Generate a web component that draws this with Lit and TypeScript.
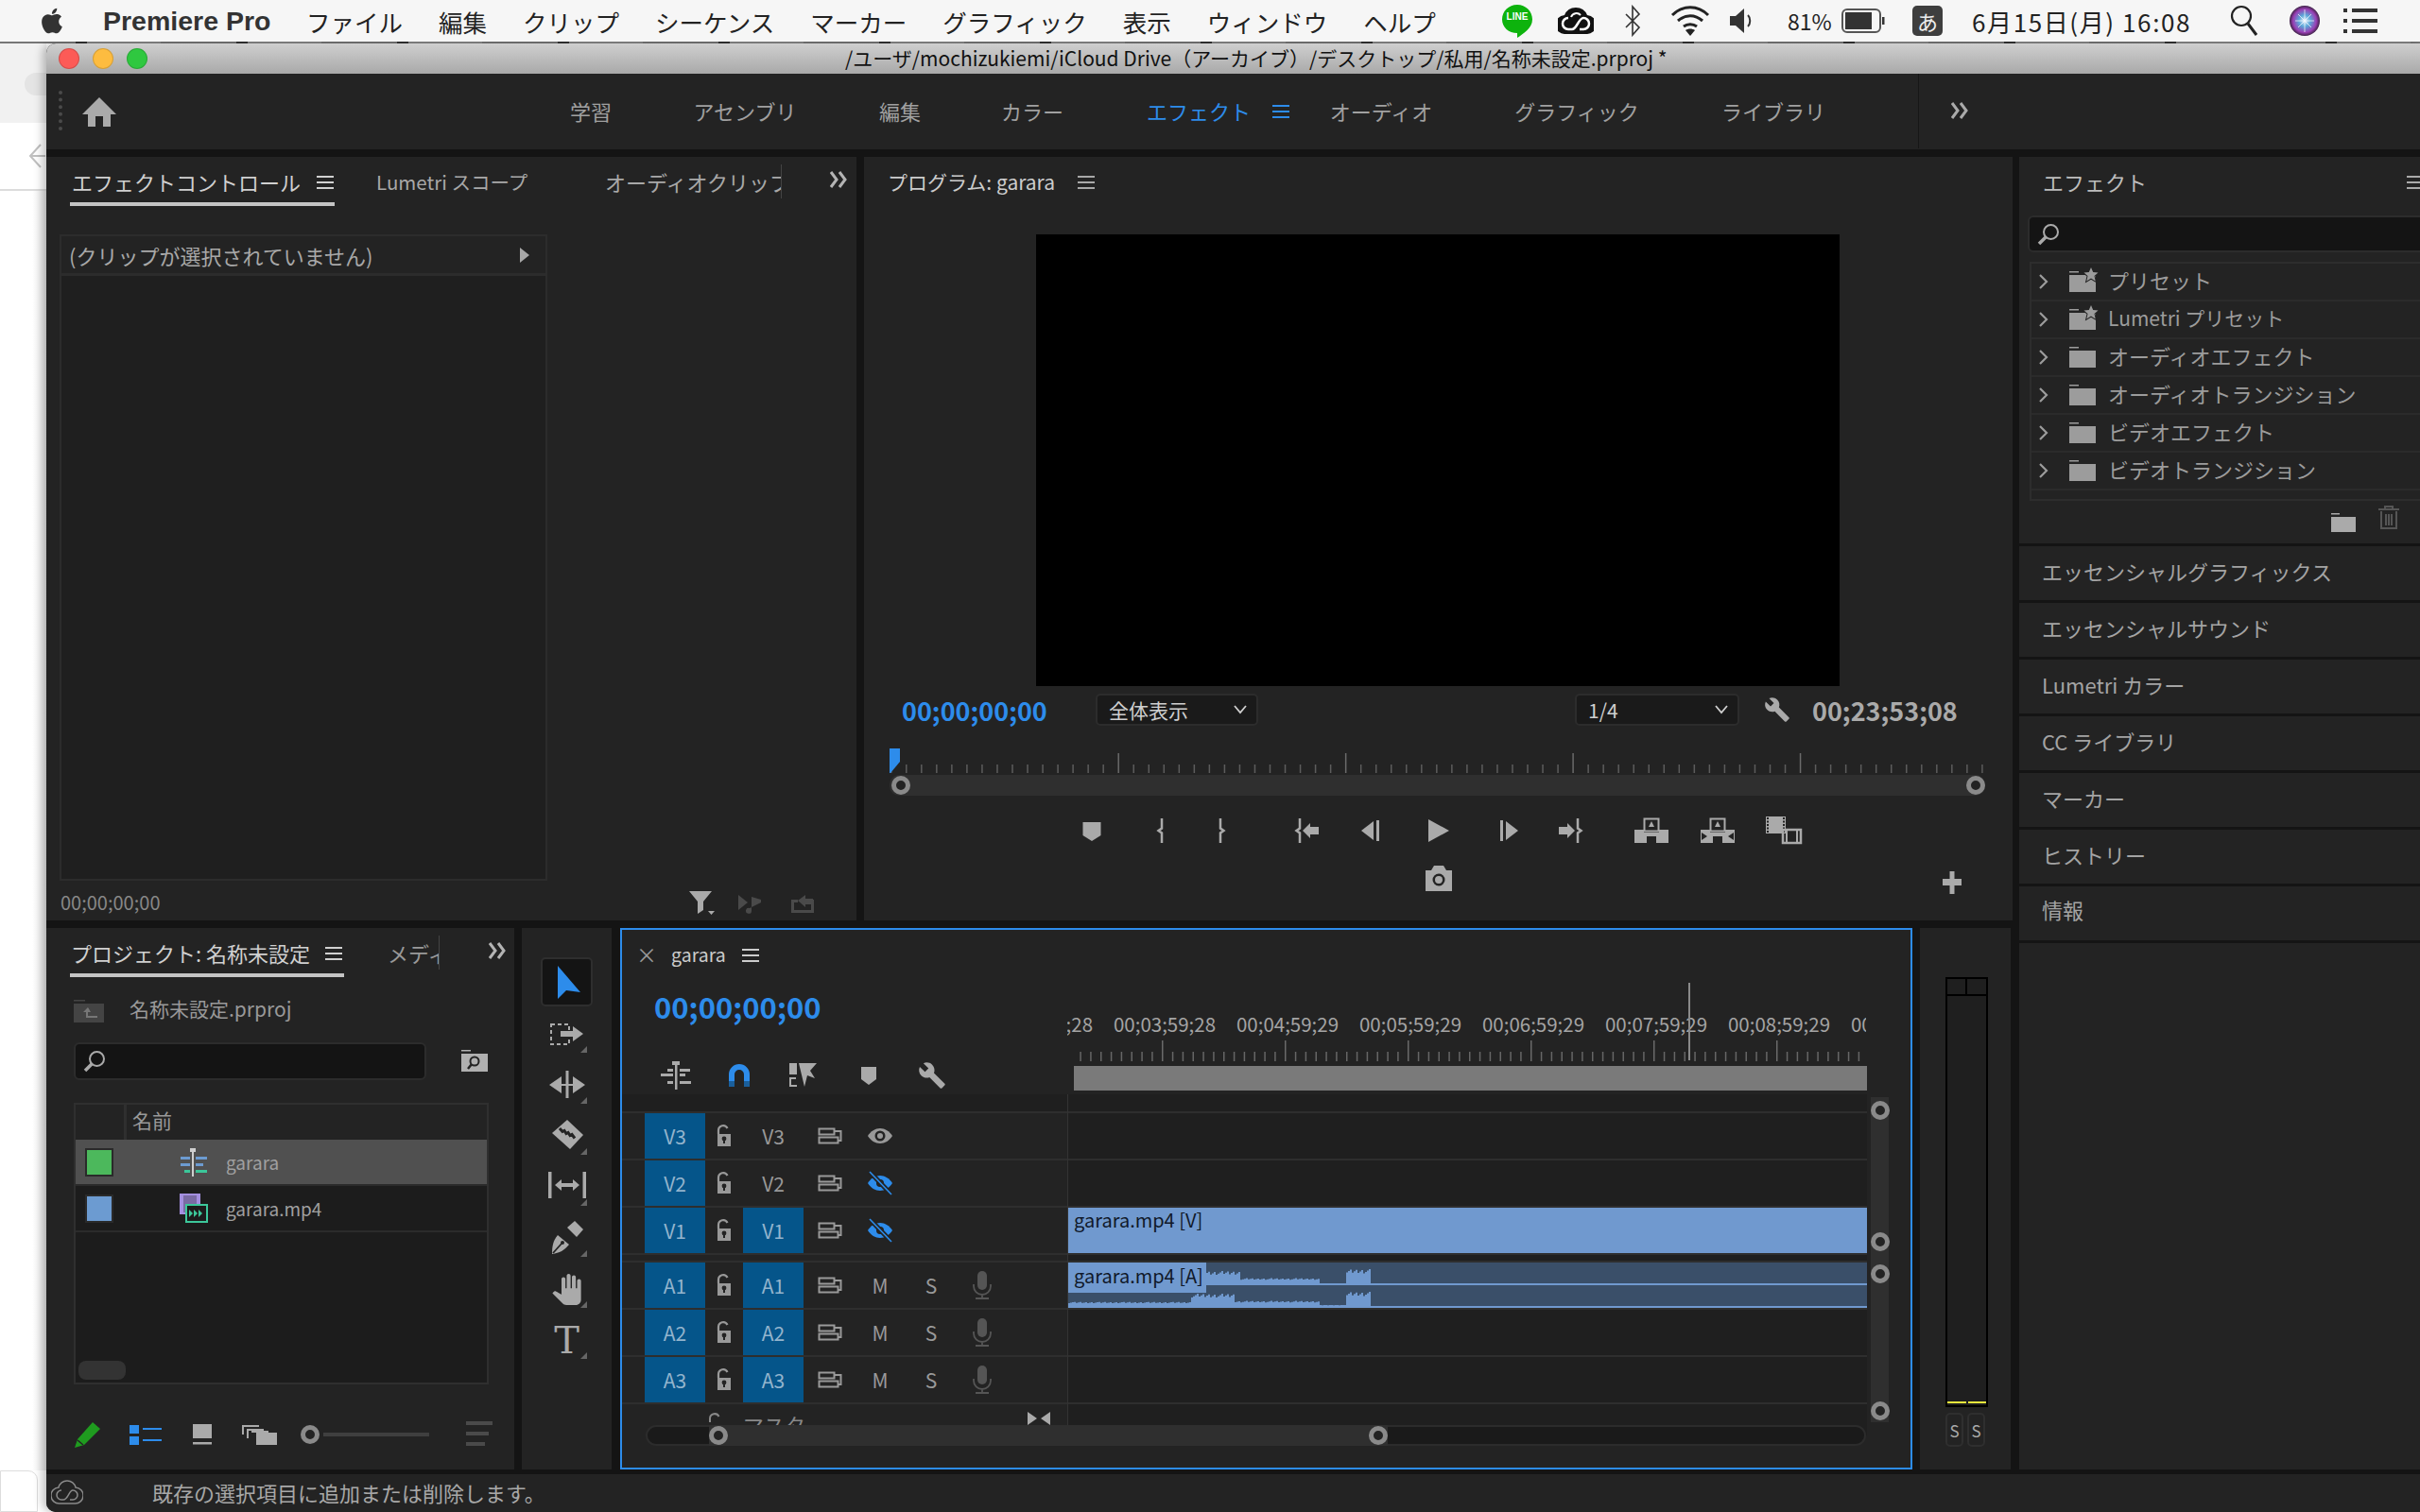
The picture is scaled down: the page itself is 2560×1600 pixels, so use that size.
import { LitElement, html, css, svg } from "lit";
import { customElement } from "lit/decorators.js";

const ic = (w: number, h: number, body: unknown, cls = "") =>
  html`<svg class="${cls}" width="${w}" height="${h}" viewBox="0 0 ${w} ${h}" fill="currentColor">${body}</svg>`;

const burger = (c = "") => ic(18, 14, svg`<rect y="0" width="18" height="2"/><rect y="6" width="18" height="2"/><rect y="12" width="18" height="2"/>`, c);
const dbl = () => ic(20, 18, svg`<path d="M2 1l6 8-6 8M11 1l6 8-6 8" fill="none" stroke="currentColor" stroke-width="3"/>`);
const search = (s = 24) => html`<svg width="${s}" height="${s}" viewBox="0 0 24 24" fill="none" stroke="currentColor"><circle cx="14.5" cy="9.5" r="7.5" stroke-width="2"/><path d="M9 15l-7 7" stroke-width="3.5"/></svg>`;
const folder = () => ic(30, 26, svg`<rect x="1" y="2" width="10" height="1.5"/><rect x="1" y="6" width="28" height="18"/>`);
const starFolder = () => html`<svg class="ov" width="32" height="26" viewBox="0 0 32 26" fill="currentColor"><rect x="1" y="2" width="10" height="1.500"/><rect x="1" y="6" width="28" height="18"/><path d="M24 -2l2.200 5 5.300.5-4 3.600 1.200 5.300-4.700-2.800-4.700 2.800 1.200-5.300-4-3.600 5.300-.5z" stroke="#232323" stroke-width="2" paint-order="stroke"/></svg>`;
const chevron = () => ic(14, 20, svg`<path d="M3 3l7 7-7 7" fill="none" stroke="currentColor" stroke-width="2.2"/>`);
const wrench = (s = 28) => html`<svg width="${s}" height="${s}" viewBox="0 0 24 24" fill="currentColor"><path d="M22.7 19l-9.1-9.1c.9-2.3.4-5-1.5-6.9-2-2-5-2.4-7.4-1.3L9 6 6 9 1.6 4.7C.4 7.1.9 10.1 2.9 12.1c1.9 1.9 4.6 2.4 6.9 1.5l9.1 9.1c.4.4 1 .4 1.4 0l2.3-2.3c.5-.4.5-1.1.1-1.4z"/></svg>`;
const markerI = () => ic(40, 40, svg`<path d="M10.5 11h19v14L20 31l-9.500-6z"/>`);
const lockI = () => ic(20, 24, svg`<path d="M4 10V6a5 5 0 0 1 9.500-2" fill="none" stroke="currentColor" stroke-width="2.200"/><path d="M3 10h14v13H3z"/><circle cx="10" cy="15" r="2.400" fill="#232323"/><rect x="9" y="15" width="2" height="5" fill="#232323"/>`);
const syncI = () => ic(26, 20, svg`<path d="M1.500 2.500h16v6h-16zM1.500 11.500h20v6h-20zM17.500 5h7v10h-3" fill="none" stroke="currentColor" stroke-width="2"/>`);
const eyeI = () => ic(28, 20, svg`<path d="M1 10c3-5 8-8 13-8s10 3 13 8c-3 5-8 8-13 8S4 15 1 10z"/><circle cx="14" cy="10" r="5.500" fill="#232323"/><circle cx="14" cy="10" r="3"/>`);
const eyeOff = () => html`<span class="blue">${ic(28, 26, svg`<path d="M1 13c3-5 8-8 13-8s10 3 13 8c-3 5-8 8-13 8S4 18 1 13z"/><circle cx="14" cy="13" r="4" fill="#232323"/><path d="M3 1l23 24" stroke="#232323" stroke-width="5"/><path d="M3 1l23 24" stroke="currentColor" stroke-width="1.600"/>`)}</span>`;
const micI = () => ic(20, 30, svg`<rect x="5" y="0" width="10" height="20" rx="5"/><path d="M1 14v2a9 9 0 0 0 18 0v-2M10 25v4M3 29h14" fill="none" stroke="currentColor" stroke-width="1.800"/>`);

const placed = (origin: number, size: number, items: [number, unknown][]) => {
  let cur = origin;
  return items.map(([c, t]) => {
    const m = c - size / 2 - cur;
    cur = c + size / 2;
    return html`<span class="slot" style="margin-left:${m}px;width:${size}px">${t}</span>`;
  });
};

const filmDash = (x: number, y0: number, n: number) => {
  const out: unknown[] = [];
  for (let i = 0; i < n; i++) out.push(svg`<rect x="${x}" y="${y0 + i * 3.500}" width="2" height="2" fill="#232323"/>`);
  return out;
};

const transport: [number, unknown][] = [
  [1155, markerI()],
  [1229, ic(40, 40, svg`<path d="M20 7v10.500l-3.500 2.500 3.500 2.500V33" fill="none" stroke="currentColor" stroke-width="2.500"/>`)],
  [1291, ic(40, 40, svg`<path d="M20 7v10.500l3.500 2.500-3.500 2.500V33" fill="none" stroke="currentColor" stroke-width="2.500"/>`)],
  [1384, ic(40, 40, svg`<path d="M11 7v10.500l-3.500 2.500 3.500 2.500V33" fill="none" stroke="currentColor" stroke-width="2.500"/><path d="M14 20l8-8v4h9v8h-9v4z"/>`)],
  [1452, ic(40, 40, svg`<path d="M8 20l13-10v20z"/><rect x="24" y="9" width="3" height="22"/>`)],
  [1522, ic(40, 40, svg`<path d="M9 8l22 12L9 32z"/>`)],
  [1594, ic(40, 40, svg`<path d="M32 20L19 10v20z"/><rect x="13" y="9" width="3" height="22"/>`)],
  [1660, ic(40, 40, svg`<path d="M29 7v10.500l3.500 2.500-3.500 2.500V33" fill="none" stroke="currentColor" stroke-width="2.500"/><path d="M26 20l-8-8v4H9v8h9v4z"/>`)],
  [1747, ic(40, 40, svg`<path d="M12.500 7.500h15v13h-15z" fill="none" stroke="currentColor" stroke-width="2"/><path d="M20 10l3 6h-6z"/><path d="M2 19h10v3h16v-3h10v14H25v-7H15v7H2z"/>`)],
  [1817, ic(40, 40, svg`<path d="M12.500 7.500h15v13h-15z" fill="none" stroke="currentColor" stroke-width="2"/><path d="M20 10l3 6h-6z"/><path d="M2 19h10v3h16v-3h10v14H25v-7H15v7H2z"/><path d="M3 22l6 4-6 4zM37 22l-6 4 6 4z" fill="#232323"/>`)],
  [1887, ic(40, 40, svg`<rect x="1" y="5" width="21" height="18"/>${filmDash(2, 6, 5)}${filmDash(19, 6, 5)}<rect x="19" y="19" width="19" height="14" fill="none" stroke="currentColor" stroke-width="2.500"/><rect x="22" y="19" width="2" height="14"/><rect x="33" y="19" width="2" height="14"/>`)],
];

const tools: [unknown, boolean][] = [
  [html`<span class="blue">${ic(40, 40, svg`<path d="M10 3l24 28-15-2-9 9z"/>`)}</span>`, false],
  [ic(40, 40, svg`<path d="M3 10h19v21H3z" fill="none" stroke="currentColor" stroke-width="2" stroke-dasharray="4 3"/><path d="M13 17h13v-5l11 8-11 8v-5H13z"/>`), true],
  [ic(40, 40, svg`<path d="M1 20l13-9v18zM39 20l-13-9v18z"/><rect x="18.500" y="5" width="3" height="29"/><rect x="13" y="19" width="14" height="2"/>`), true],
  [ic(40, 40, svg`<path d="M20 3l17 16-14 15L4 17z"/><path d="M12 12l3 3.500 2-1 2 3 2-1 2 3 2-1 3 4" fill="none" stroke="#232323" stroke-width="3"/>`), true],
  [ic(40, 40, svg`<rect x="0" y="4" width="3.500" height="28"/><rect x="36.500" y="4" width="3.500" height="28"/><path d="M7 18l7-6v4h12v-4l7 6-7 6v-4H14v4z"/>`), true],
  [ic(40, 40, svg`<path d="M4 37c0-8 1-14 6-20l12 10c-5 6-10 9-18 10z"/><path d="M5 36l9-10" stroke="#232323" stroke-width="1.800"/><circle cx="15" cy="25" r="2" fill="#232323"/><path d="M20 9l8-7 9 9-7 8z"/>`), true],
  [html`<svg width="33" height="33" viewBox="0 0 24 24" fill="currentColor"><path d="M23 5.500V20c0 2.200-1.800 4-4 4h-7.300c-1.080 0-2.100-.43-2.850-1.190L1 14.830s1.260-1.230 1.300-1.250c.22-.19.49-.29.79-.29.22 0 .42.06.6.16.04.01 4.310 2.460 4.310 2.460V4c0-.83.67-1.500 1.500-1.500S11 3.170 11 4v7h1V1.500c0-.83.67-1.500 1.500-1.500S15 .67 15 1.500V11h1V2.500c0-.83.67-1.500 1.500-1.500s1.500.67 1.500 1.500V11h1V5.500c0-.83.67-1.500 1.500-1.500s1.500.67 1.500 1.500z"/></svg>`, true],
  [html`<span class="tool-t">T</span>`, true],
];

const jitter = (i: number) => ((i * 7919) % 13) / 13;
const wave = (w: number, f: (x: number) => number, h: number) => {
  let d = `M0 ${h}`;
  for (let x = 0; x < w; x += 2) {
    const v = f(x);
    const y = v <= 0 ? h : h - v * (0.75 + 0.35 * jitter(x));
    d += `V${y.toFixed(1)}H${x + 2}`;
  }
  d += `V${h}Z`;
  return svg`<path d="${d}" fill="#7099cf"/>`;
};
const topWave = (x: number) => (x < 146 ? 0 : x < 182 ? 12 : x < 266 ? 5 : x < 294 ? 0 : x < 320 ? 14 : 0);
const botWave = (x: number) => (x < 130 ? 4 : x < 175 ? 12 : x < 266 ? 5 : x < 294 ? 1 : x < 320 ? 14 : 0);

const programRuler = () => {
  const out: unknown[] = [];
  for (let i = 0; i < 73; i++) {
    const x = 1 + i * 16.03;
    const major = i % 15 === 0 && i > 0 && i < 72;
    out.push(svg`<rect x="${x}" y="${major ? 5 : 17}" width="1.500" height="${major ? 21 : 9}" fill="${major ? "#6a6a6a" : "#5c5c5c"}"/>`);
  }
  return html`<svg class="pruler" width="1157" height="28">${out}<path d="M0 0h11v14L1 26H0z" fill="#2d8ceb"/></svg>`;
};
const tlRuler = () => {
  const out: unknown[] = [];
  for (let i = 0; i < 78; i++) {
    const x = 100 + (i - 9) * 10.833;
    if (x < 3 || x > 845) continue;
    const major = (i - 9) % 12 === 0;
    out.push(svg`<rect x="${x}" y="${major ? 0 : 12}" width="1.500" height="${major ? 22 : 10}" fill="${major ? "#6a6a6a" : "#666"}"/>`);
  }
  return html`<svg class="tlruler" width="845" height="22">${out}</svg>`;
};

const menus = ["ファイル", "編集", "クリップ", "シーケンス", "マーカー", "グラフィック", "表示", "ウィンドウ", "ヘルプ"];
const fxItems: [string, boolean][] = [
  ["プリセット", true], ["Lumetri プリセット", true], ["オーディオエフェクト", false],
  ["オーディオトランジション", false], ["ビデオエフェクト", false], ["ビデオトランジション", false],
];
const fxPanels = ["エッセンシャルグラフィックス", "エッセンシャルサウンド", "Lumetri カラー", "CC ライブラリ", "マーカー", "ヒストリー", "情報"];
const nav: [string, number][] = [["学習", 625], ["アセンブリ", 788], ["編集", 952], ["カラー", 1092]];
const nav2: [string, number][] = [["オーディオ", 1461], ["グラフィック", 1668], ["ライブラリ", 1876]];
const rulerLabels = ["00;02;59;28", "00;03;59;28", "00;04;59;29", "00;05;59;29", "00;06;59;29", "00;07;59;29", "00;08;59;29", "00;09;59;29"];

@customElement("app-root")
export class AppRoot extends LitElement {
  static styles = css`
    :host { display: block; width: 2560px; height: 1600px; overflow: hidden; font-family: "Noto Sans CJK JP", "Noto Sans", sans-serif; color: #a8a8a8; font-size: 22px; }
    * { box-sizing: border-box; }
    svg { display: block; flex: none; }
    svg.ov { overflow: visible; }
    .screen { width: 2560px; height: 1600px; display: flex; flex-direction: column; background: #fff; }
    .slot { display: flex; align-items: center; justify-content: center; flex: none; height: 40px; }
    .blue { color: #2d8ceb; }

    .menubar { height: 44px; background: #f6f6f6; color: #222; display: flex; align-items: center; position: relative; flex: none; font-size: 25.500px; }
    .apple { margin-left: 39px; width: 32px; color: #333; }
    .brand { margin-left: 38px; font-family: "Liberation Sans", sans-serif; font-weight: 700; font-size: 28.500px; width: 215px; color: #333; }
    .menus { display: flex; gap: 38px; white-space: nowrap; }
    .status { margin-left: auto; display: flex; align-items: center; height: 44px; }
    .line { width: 36px; height: 36px; position: relative; display: flex; }
    .line-t { position: absolute; left: 0; right: 0; top: 8px; text-align: center; font: 700 10px "Liberation Sans", sans-serif; color: #fff; }
    .s-cc { margin-left: 25px; }
    .s-bt { margin-left: 31px; color: #333; }
    .s-wifi { margin-left: 30px; color: #222; }
    .s-vol { margin-left: 20px; color: #333; }
    .pct { font-size: 23px; width: 50px; margin-left: 36px; }
    .s-bat { margin-left: 7px; color: #333; }
    .ime { width: 32px; height: 32px; background: #3e3e3e; color: #eee; border-radius: 5px; font-size: 22px; display: flex; align-items: center; justify-content: center; margin-left: 29px; }
    .clock { font-size: 26px; letter-spacing: 1.600px; margin-left: 31px; width: 273px; white-space: nowrap; }
    .s-search { color: #222; }
    .s-siri { margin-left: 33px; }
    .s-list { margin-left: 25px; margin-right: 45px; color: #333; }
    .strip { height: 2px; background: repeating-linear-gradient(90deg, #777 0 80px, #333 80px 92px, #888 92px 170px); flex: none; }

    .main { flex: 1; display: flex; min-height: 0; }
    .desktop { width: 49px; display: flex; flex-direction: column; background: #fff; flex: none; }
    .d-top { height: 84px; background: #f1f1f1; display: flex; justify-content: flex-end; padding-top: 31px; }
    .d-circle { width: 23px; height: 24px; background: #e4e4e4; border-radius: 12px 0 0 12px; }
    .d-arrow { height: 72px; padding: 22px 0 0 30px; color: #c0c0c0; border-bottom: 2px solid #dcdcdc; flex: none; }
    .d-fill { flex: 1; background: linear-gradient(90deg, #fff 70%, #e8e8e8); }
    .d-foot { height: 44px; width: 40px; background: #fff; border: 1px solid #ddd; border-radius: 0 10px 0 0; }

    .window { flex: 1; display: flex; flex-direction: column; background: #141414; border-radius: 10px 0 0 10px; overflow: hidden; box-shadow: -4px 0 10px rgba(0,0,0,.25); }
    .title { height: 32px; flex: none; background: linear-gradient(#cfcfcf, #a9a9a9); color: #111; display: flex; align-items: center; font-size: 21px; white-space: nowrap; padding: 0 0 2px 845px; position: relative; }
    .lights { position: absolute; left: 13px; top: 5px; display: flex; gap: 14px; }
    .lights i { width: 22px; height: 22px; border-radius: 50%; display: block; border: 1px solid rgba(0,0,0,.15); }
    .lights .red { background: #fc5b57; }
    .lights .yel { background: #fdbc40; }
    .lights .grn { background: #2fc840; }
    .workspace { height: 80px; flex: none; background: #232323; display: flex; align-items: center; color: #a0a0a0; padding-bottom: 3px; }
    .grip { width: 4px; height: 42px; margin: 0 0 0 13px; border-left: 4px dotted #4a4a4a; flex: none; }
    .home { margin: 3px 0 0 21px; color: #aaa; width: 36px; }
    .nav-item { flex: none; display: flex; align-items: center; justify-content: center; height: 40px; white-space: nowrap; }
    .ws-active { color: #2d8ceb; flex: none; display: flex; align-items: center; gap: 23px; margin-left: 61px; white-space: nowrap; }
    .ws-active svg { margin-top: 3px; }
    .ws-sep { width: 1px; height: 80px; background: #161616; flex: none; margin-left: 83px; }
    .ws-more { margin-left: 33px; color: #aaa; }

    .body { flex: 1; min-height: 0; margin-top: 8px; display: flex; gap: 7px; }
    .left { width: 2080px; flex: none; display: flex; flex-direction: column; gap: 8px; }
    .top-row { height: 808px; flex: none; display: flex; gap: 8px; }
    .bottom-row { height: 573px; flex: none; display: flex; gap: 8px; }
    .panel { background: #232323; flex: none; display: flex; flex-direction: column; min-width: 0; position: relative; overflow: hidden; }

    .tabs { height: 52px; flex: none; display: flex; align-items: flex-start; white-space: nowrap; }
    .tab { height: 52px; display: flex; align-items: center; flex: none; padding: 4px 0; }
    .tab svg { margin-top: 2px; }
    .tab-on { color: #d0d0d0; border-bottom: 4px solid #c4c4c4; padding-bottom: 0; justify-content: space-between; padding-left: 2px; padding-right: 1px; }
    .tab-clip { overflow: hidden; border-right: 1px solid #444; height: 36px; margin-top: 8px; padding: 0; align-items: center; }
    .more { color: #b4b4b4; height: 48px; display: flex; align-items: center; flex: none; }
    .t-lum { margin-left: 44px; width: 242px; font-size: 20.500px; }
    .t-prog { margin-left: 25px; width: 186px; color: #ccc; font-size: 21px; }
    .t-burger { margin-left: 15px; }
    .t-proj { margin-left: 25px; width: 290px; padding-left: 1px; padding-right: 2px; }
    .t-media { margin-left: 46px; width: 55px; color: #999; }

    .ec { width: 857px; }
    .ec-box { margin: 30px 0 0 14px; width: 516px; height: 684px; border: 2px solid #2c2c2c; background: #1f1f1f; flex: none; }
    .ec-head { height: 42px; background: #232323; border-bottom: 3px solid #2c2c2c; display: flex; align-items: center; justify-content: space-between; padding: 0 16px 0 8px; color: #a8a8a8; font-size: 22px; }
    .ec-foot { flex: 1; display: flex; align-items: center; color: #888; font-size: 20px; padding: 3px 0 0 15px; position: relative; }
    .ef-time { width: 664px; }
    .ef-filter { color: #aaa; width: 52px; }
    .ef-a { color: #4a4a4a; width: 55px; }
    .ef-e { color: #4a4a4a; }

    .program { width: 1215px; }
    .video { margin: 30px 0 0 182px; width: 850px; height: 478px; background: #000; flex: none; }
    .pcontrols { display: flex; align-items: center; height: 34px; margin-top: 8px; flex: none; }
    .tc { color: #2d8ceb; font-weight: 700; font-size: 27px; white-space: nowrap; flex: none; }
    .tc-p { margin-left: 40px; width: 167px; }
    .dd { background: #1a1a1a; border: 2px solid #2c2c2c; border-radius: 5px; height: 34px; display: flex; align-items: center; justify-content: space-between; padding: 0 10px 0 12px; color: #cfcfcf; font-size: 21px; flex: none; }
    .dd1 { width: 172px; margin-left: 38px; }
    .dd2 { width: 174px; margin-left: 335px; }
    .pwrench { margin-left: 26px; color: #aaa; flex: none; }
    .dur { color: #aaa; margin-left: 23px; font-weight: 700; font-size: 27px; flex: none; }
    .pruler { margin: 24px 0 0 27px; }
    .pscroll { margin-left: 27px; width: 1159px; height: 22px; background: #2f2f2f; border-radius: 10px; display: flex; justify-content: space-between; align-items: center; padding: 0 0 0 2px; flex: none; }
    .knob { width: 20px; height: 20px; border-radius: 50%; border: 5px solid #8a8a8a; background: #232323; flex: none; display: block; }
    .ptrans { display: flex; margin-top: 17px; height: 40px; flex: none; color: #aaa; }
    .pcam { display: flex; margin-top: 11px; height: 40px; flex: none; color: #aaa; }

    .project { width: 495px; }
    .pj-path { display: flex; align-items: center; height: 24px; margin: 24px 0 0 29px; flex: none; color: #999; font-size: 21px; white-space: nowrap; }
    .pj-path svg { color: #444; margin-right: 27px; }
    .pj-path span { margin-top: -7px; }
    .pj-search { display: flex; align-items: center; margin: 21px 0 0 29px; flex: none; }
    .sbox { background: #141414; border: 2px solid #2c2c2c; border-radius: 6px; display: flex; align-items: center; color: #aaa; }
    .sb1 { width: 373px; height: 40px; padding-left: 8px; }
    .pj-sf { margin-left: 37px; color: #b0b0b0; }
    .pj-list { margin: 24px 0 0 29px; width: 439px; height: 298px; background: #1c1c1c; border: 2px solid #2f2f2f; flex: none; display: flex; flex-direction: column; }
    .pj-head { height: 37px; background: #232323; display: grid; grid-template-columns: 51px 1fr; flex: none; }
    .pj-head span { display: flex; align-items: center; padding: 0 0 5px 6px; border-left: 3px solid #2f2f2f; color: #999; font-size: 21px; }
    .pj-head i { display: block; }
    .pj-row { height: 49px; display: grid; grid-template-columns: 41px 1fr; align-items: center; padding-left: 10px; border-bottom: 2px solid #2b2b2b; flex: none; font-size: 19px; color: #a0a0a0; }
    .pj-row.sel { background: #505050; }
    .sw { width: 30px; height: 30px; border: 2px solid #2a2a2a; display: block; }
    .sw.g { background: #4cb85c; }
    .sw.b { background: #6c9bd1; }
    .pj-item { display: flex; align-items: center; gap: 19px; margin-left: 59px; }
    .pj-pad { flex: 1; display: flex; align-items: flex-end; padding: 0 0 3px 3px; }
    .pill { width: 50px; height: 20px; background: #333; border-radius: 8px; }
    .pj-foot { display: flex; height: 40px; margin-top: 33px; color: #aaa; flex: none; }
    .pf-pencil { color: #1f9b1f; }
    .pf-knob { margin: 10px 0 0 24px; }
    .thumbline { width: 112px; height: 4px; background: #3f3f3f; margin: 18px 0 0 4px; display: block; }
    .pf-sort { margin: 6px 0 0 39px; color: #4a4a4a; }

    .tools { width: 95px; padding-top: 31px; color: #aaa; }
    .tool { height: 54px; flex: none; display: flex; align-items: center; justify-content: center; position: relative; }
    .tool.on { width: 55px; margin-left: 20px; background: #141414; border: 2px solid #2e2e2e; border-radius: 5px; height: 52px; margin-bottom: 2px; }
    .tool .tri { position: absolute; left: 62px; top: 40px; width: 0; height: 0; border-left: 7px solid transparent; border-bottom: 7px solid #666; }
    .tool-t { font-family: "DejaVu Serif", serif; font-size: 40px; line-height: 40px; color: #aaa; }

    .timeline { width: 1367px; border: 2px solid #2d8ceb; margin-left: 1px; margin-right: 0; }
    .tl-top { height: 174px; flex: none; display: grid; grid-template-columns: 471px 892px; }
    .tl-left { display: flex; flex-direction: column; }
    .tl-tab { height: 54px; display: flex; align-items: center; color: #ccc; font-size: 19.500px; flex: none; padding-bottom: 4px; }
    .tl-x { margin-left: 15px; width: 37px; font-size: 22px; color: #999; }
    .tl-tab svg { margin: 3px 0 0 17px; }
    .tc-t { font-size: 31px; height: 56px; display: flex; align-items: center; padding: 0 0 3px 34px; }
    .tl-tools { display: flex; height: 40px; margin-top: 24px; color: #aaa; flex: none; }
    .tl-right { position: relative; padding-top: 84px; }
    .labels { width: 845px; overflow: hidden; display: flex; height: 30px; font-size: 20.500px; color: #a4a4a4; align-items: center; }
    .labels span { width: 130px; flex: none; text-align: center; }
    .labels span:first-child { margin-left: -92px; }
    .tlruler { margin-top: 3px; }
    .work { margin: 5px 0 0 7px; width: 839px; height: 26px; background: #7a7a7a; }
    .cti { position: absolute; left: 657px; top: 56px; width: 1.500px; height: 82px; background: #8a8a8a; }

    .tl-tracks { display: grid; grid-template-columns: 471px 846px 46px; height: 347px; flex: none; }
    .thead { display: flex; flex-direction: column; background: #232323; }
    .tbody { display: flex; flex-direction: column; background: #1f1f1f; border-left: 1px solid #333; }
    .spacer { height: 20px; flex: none; border-bottom: 2px solid #2e2e2e; background: #1f1f1f; }
    .tr { height: 50px; flex: none; border-bottom: 2px solid #2e2e2e; display: grid; grid-template-columns: 24px 64px 40px 64px 56px 50px 58px 50px; align-items: stretch; }
    .tr > span { display: flex; align-items: center; justify-content: center; font-size: 21px; color: #999; padding-bottom: 1px; }
    .tr > .tgt { background: #05558a; color: #93b4cd; }
    .tr > .dim { color: #555; }
    .band { height: 8px; flex: none; border-bottom: 2px solid #2e2e2e; }
    .mask { flex: 1; overflow: hidden; display: grid; grid-template-columns: 24px 64px 40px 260px 1fr; padding-top: 9px; font-size: 22px; color: #888; line-height: 24px; }
    .mask svg { margin-left: 1px; }
    .bow { justify-self: end; padding-right: 18px; margin-top: -1px; color: #aaa; }
    .bline { height: 50px; flex: none; border-bottom: 2px solid #2e2e2e; }
    .bband { height: 8px; flex: none; border-bottom: 2px solid #2e2e2e; }
    .clip { height: 48px; background: #7099cf; color: #10192a; font-size: 20px; padding: 0 0 0 6px; line-height: 26px; }
    .aclip { height: 48px; background: #3a4f69; position: relative; display: flex; flex-direction: column; }
    .aclip svg { flex: none; }
    .aclab { position: absolute; left: 0; top: 0; width: 146px; height: 32px; background: #7099cf; color: #10192a; font-size: 20px; padding-left: 6px; line-height: 28px; white-space: nowrap; }
    .vs { margin: 3px 0 0 4px; width: 19px; height: 344px; background: #2f2f2f; display: flex; flex-direction: column; align-items: center; padding-top: 4px; }
    .vs .knob:nth-child(2) { margin-top: 119px; }
    .vs .knob:nth-child(3) { margin-top: 14px; }
    .vs .knob:nth-child(4) { margin-top: 125px; }
    .zoom { display: grid; grid-template-columns: 77px 698px 516px; margin: 3px 0 0 25px; height: 22px; width: 1291px; flex: none; }
    .z1 { background: #1a1a1a; border: 2px solid #2c2c2c; border-right: 0; border-radius: 11px 0 0 11px; }
    .z2 { background: #2f2f2f; display: flex; justify-content: space-between; align-items: center; margin: 0 -10px; position: relative; }
    .z3 { background: #1a1a1a; border: 2px solid #2c2c2c; border-left: 0; border-radius: 0 11px 11px 0; }

    .meter { width: 96px; padding: 52px 0 0 27px; }
    .mbox { width: 45px; height: 455px; border: 2px solid #000; background: #1f1f1f; display: flex; flex-direction: column; flex: none; }
    .mtop { height: 18px; border-bottom: 2px solid #000; display: grid; grid-template-columns: 1fr 1fr; flex: none; }
    .mtop i:first-child { border-right: 2px solid #000; }
    .mbody { flex: 1; display: grid; grid-template-columns: 1fr 1fr; gap: 2px; }
    .mbody i { display: flex; flex-direction: column; justify-content: flex-end; padding-bottom: 2px; }
    .mbody b { display: block; height: 2px; background: #e6e63c; }
    .mss { display: flex; gap: 4px; margin-top: 6px; width: 45px; }
    .mss span { width: 19px; height: 36px; border: 2px solid #2f2f2f; border-radius: 5px; font-size: 17px; color: #aaa; display: flex; align-items: center; justify-content: center; }

    .fx { width: 424px; flex: none; }
    .fx-head { height: 52px; display: flex; align-items: center; color: #bdbdbd; flex: none; padding-left: 25px; position: relative; }
    .fx-head svg { position: absolute; left: 410px; top: 20px; color: #aaa; }
    .fx-search { margin: 10px 0 0 9px; width: 440px; height: 39px; padding-left: 8px; flex: none; }
    .fx-list { margin: 10px 0 0 11px; width: 440px; height: 253px; border: 2px solid #2d2d2d; flex: none; }
    .fx-row { height: 40px; border-bottom: 2px solid #2b2b2b; display: grid; grid-template-columns: 14px 30px 1fr; gap: 0 19px; padding-left: 6px; align-items: center; color: #9c9c9c; font-size: 22px; }
    .lab { margin: -5px 0 0 -7px; }
    .lab.lm { font-size: 21px; }
    .fx-foot { height: 45px; display: flex; color: #aaa; flex: none; align-items: center; }
    .fx-foot span { height: 36px; }
    .trash { color: #555; display: flex; }
    .fx-tab { height: 60px; flex: none; border-top: 3px solid #141414; display: flex; align-items: center; padding: 0 0 6px 24px; color: #a4a4a4; }
    .fx-tab:last-child { border-bottom: 3px solid #141414; height: 63px; padding-bottom: 9px; }

    .statusbar { height: 40px; margin-top: 5px; background: #232323; flex: none; display: flex; align-items: center; color: #a8a8a8; font-size: 22px; white-space: nowrap; padding-bottom: 2px; }
    .statusbar svg { margin: 0 0 0 5px; color: #8a8a8a; }
    .statusbar span { margin-left: 73px; }
  `;

  private menubar() {
    return html`<div class="menubar">
      <span class="apple"><svg width="32" height="36" viewBox="0 0 24 24" fill="currentColor"><path d="M18.71 19.5c-.83 1.24-1.71 2.45-3.05 2.47-1.34.03-1.77-.79-3.29-.79-1.53 0-2 .77-3.27.82-1.31.05-2.3-1.32-3.14-2.53C4.25 17 2.94 12.45 4.7 9.39c.87-1.52 2.43-2.48 4.12-2.51 1.28-.02 2.5.87 3.29.87.78 0 2.26-1.07 3.81-.91.65.03 2.47.26 3.64 1.98-.09.06-2.17 1.28-2.15 3.81.03 3.02 2.65 4.03 2.68 4.04-.03.07-.42 1.44-1.38 2.83M13 3.5c.73-.83 1.94-1.46 2.94-1.5.13 1.17-.34 2.35-1.04 3.19-.69.85-1.83 1.51-2.95 1.42-.15-1.15.41-2.35 1.05-3.11z"/></svg></span>
      <span class="brand">Premiere Pro</span>
      <div class="menus">${menus.map((m) => html`<span>${m}</span>`)}</div>
      <div class="status">
        <span class="line">${ic(36, 36, svg`<path d="M18 1C9 1 2 8 2 16.500 2 25 9 31 18 31v5c6-4 16-10 16-19.500C34 8 27 1 18 1z" fill="#0db30d"/>`)}<span class="line-t">LINE</span></span>
        <span class="s-cc">${ic(38, 28, svg`<path d="M19 0a13 13 0 0 1 12 8 10 10 0 0 1-1 20H8A10 10 0 0 1 7 8 13 13 0 0 1 19 0z" fill="#111"/><path d="M11 11a6 6 0 0 0 0 12h4c5 0 7-12 12-12a6 6 0 0 1 0 12h-4" fill="none" stroke="#fff" stroke-width="2.500"/><path d="M14 10a6 6 0 0 1 10-2" fill="none" stroke="#fff" stroke-width="2"/>`)}</span>
        <span class="s-bt">${ic(20, 34, svg`<path d="M3 10l14 14-7 8V2l7 8L3 24" fill="none" stroke="currentColor" stroke-width="1.600"/>`)}</span>
        <span class="s-wifi">${ic(42, 34, svg`<path d="M2 11c11-11 27-11 38 0M8 17c8-7 18-7 26 0M14 23c4-3 10-3 14 0" fill="none" stroke="currentColor" stroke-width="3"/><path d="M21 33l-5-6c3-2 7-2 10 0z"/>`)}</span>
        <span class="s-vol">${ic(26, 28, svg`<path d="M1 9h6l9-8v26l-9-8H1z"/><path d="M20 8c3 3 3 9 0 12" fill="none" stroke="currentColor" stroke-width="2"/>`)}</span>
        <span class="pct">81%</span>
        <span class="s-bat">${ic(46, 26, svg`<rect x="1" y="1" width="40" height="24" rx="5" fill="none" stroke="#555" stroke-width="2"/><rect x="4" y="4" width="28" height="18" fill="#333"/><rect x="43" y="9" width="2.500" height="8"/>`)}</span>
        <span class="ime">あ</span>
        <span class="clock">6月15日(月) 16:08</span>
        <span class="s-search">${ic(30, 34, svg`<circle cx="12" cy="12" r="10" fill="none" stroke="currentColor" stroke-width="2.200"/><path d="M19 20l9 12" stroke="currentColor" stroke-width="3"/>`)}</span>
        <span class="s-siri"><svg width="32" height="36" viewBox="0 0 32 36"><defs><radialGradient id="si" cx="50%" cy="50%" r="55%"><stop offset="0" stop-color="#e8f2ff"/><stop offset=".35" stop-color="#5aa7d8"/><stop offset=".7" stop-color="#9a3fb5"/><stop offset="1" stop-color="#161616"/></radialGradient></defs><circle cx="16" cy="18" r="16" fill="url(#si)"/><path d="M16 6v24M6 18h20M9 11l14 14M23 11L9 25" stroke="#fff" stroke-width="1" opacity=".7"/></svg></span>
        <span class="s-list">${ic(36, 28, svg`<rect x="0" y="1" width="4" height="4"/><rect x="9" y="1" width="27" height="4"/><rect x="0" y="12" width="4" height="4"/><rect x="9" y="12" width="27" height="4"/><rect x="0" y="23" width="4" height="4"/><rect x="9" y="23" width="27" height="4"/>`)}</span>
      </div>
    </div>`;
  }

  private workspace() {
    let cur = 49 + 17 + 21 + 36;
    const items = nav.map(([t, c]) => {
      const w = 120;
      const m = c - w / 2 - cur;
      cur = c + w / 2;
      return html`<span class="nav-item" style="margin-left:${m}px;width:${w}px">${t}</span>`;
    });
    let cur2 = 1364;
    const items2 = nav2.map(([t, c]) => {
      const w = 140;
      const m = c - w / 2 - cur2;
      cur2 = c + w / 2;
      return html`<span class="nav-item" style="margin-left:${m}px;width:${w}px">${t}</span>`;
    });
    return html`<div class="workspace">
      <i class="grip"></i>
      <span class="home">${ic(36, 32, svg`<path d="M18 1L36 19H30v13H22V21h-8v11H6V19H0z" />`)}</span>
      ${items}
      <span class="ws-active">エフェクト${burger()}</span>
      ${items2}
      <i class="ws-sep"></i>
      <span class="ws-more">${dbl()}</span>
    </div>`;
  }

  private effectControls() {
    return html`<div class="panel ec">
      <div class="tabs">
        <span class="tab tab-on" style="margin-left:25px;width:280px"><span>エフェクトコントロール</span>${burger()}</span>
        <span class="tab t-lum">Lumetri スコープ</span>
        <span class="tab tab-clip" style="width:187px">オーディオクリップミキサー</span>
        <span class="more" style="margin-left:50px">${dbl()}</span>
      </div>
      <div class="ec-box"><div class="ec-head"><span>(クリップが選択されていません)</span>${ic(12, 18, svg`<path d="M1 1l10 8-10 8z"/>`)}</div></div>
      <div class="ec-foot"><span class="ef-time">00;00;00;00</span>
        <span class="ef-filter">${ic(28, 28, svg`<path d="M1 2h24l-9 11v9l-6 4V13z"/><path d="M21 23h7l-3.500 4z"/>`)}</span>
        <span class="ef-a">${ic(28, 24, svg`<path d="M1 4l10 8-10 8zM13 18a3 3 0 1 0 2 3V6l10 3v3" fill="currentColor"/>`)}</span>
        <span class="ef-e">${ic(28, 24, svg`<path d="M2 9h7v3H5v8h18V9h3v14H2zM9 10l8-6v4h8v6h-8v3z"/>`)}</span>
      </div>
    </div>`;
  }

  private program() {
    return html`<div class="panel program">
      <div class="tabs">
        <span class="tab t-prog">プログラム: garara</span>
        <span class="tab t-burger">${burger()}</span>
      </div>
      <div class="video"></div>
      <div class="pcontrols">
        <span class="tc tc-p">00;00;00;00</span>
        <span class="dd dd1">全体表示 ${ic(14, 10, svg`<path d="M1 1l6 7 6-7" fill="none" stroke="currentColor" stroke-width="1.800"/>`)}</span>
        <span class="dd dd2">1/4 ${ic(14, 10, svg`<path d="M1 1l6 7 6-7" fill="none" stroke="currentColor" stroke-width="1.800"/>`)}</span>
        <span class="pwrench">${wrench()}</span>
        <span class="dur">00;23;53;08</span>
      </div>
      ${programRuler()}
      <div class="pscroll"><i class="knob"></i><i class="knob"></i></div>
      <div class="ptrans">${placed(914, 40, transport)}</div>
      <div class="pcam">${placed(914, 40, [
        [1522, ic(32, 36, svg`<path d="M8 9l3-5h10l3 5h6v22H2V9z"/><circle cx="16" cy="19" r="6.500" fill="#232323"/><circle cx="16" cy="19" r="4"/>`)],
        [2065, ic(24, 40, svg`<rect x="9.500" y="12" width="5" height="24"/><rect x="2" y="20" width="20" height="7"/>`)],
      ])}</div>
    </div>`;
  }

  private project() {
    return html`<div class="panel project">
      <div class="tabs">
        <span class="tab tab-on t-proj"><span>プロジェクト: 名称未設定</span>${burger()}</span>
        <span class="tab tab-clip t-media">メディアブラウザー</span>
        <span class="more" style="margin-left:51px">${dbl()}</span>
      </div>
      <div class="pj-path">${ic(32, 24, svg`<rect x="0" y="0" width="12" height="1.500"/><rect x="0" y="4" width="32" height="20"/><path d="M15 8l-5 5h3v6h12v-2H15v-4h3z" fill="#999" opacity=".6"/>`)}<span>名称未設定.prproj</span></div>
      <div class="pj-search">
        <div class="sbox sb1">${search()}</div>
        <span class="pj-sf">${ic(28, 24, svg`<rect x="0" y="0" width="10" height="1.500"/><rect x="0" y="4" width="28" height="19"/><circle cx="14" cy="12" r="4.500" fill="none" stroke="#232323" stroke-width="2"/><path d="M11 15l-4 5" stroke="#232323" stroke-width="2.500"/>`)}</span>
      </div>
      <div class="pj-list">
        <div class="pj-head"><i></i><span>名前</span></div>
        <div class="pj-row sel"><i class="sw g"></i>
          <span class="pj-item">
            <svg width="30" height="30" viewBox="0 0 30 30"><rect x="1" y="9" width="10" height="3" fill="#6c9bd1"/><rect x="17" y="9" width="12" height="3" fill="#6c9bd1"/><rect x="1" y="16" width="10" height="3" fill="#6c9bd1"/><rect x="17" y="16" width="8" height="3" fill="#6c9bd1"/><rect x="5" y="23" width="6" height="3" fill="#3cc79a"/><rect x="17" y="23" width="12" height="3" fill="#3cc79a"/><rect x="13" y="0" width="2" height="30" fill="#cfcfcf"/><rect x="11" y="0" width="6" height="4" fill="#cfcfcf"/></svg>
            <span>garara</span></span></div>
        <div class="pj-row"><i class="sw b"></i>
          <span class="pj-item">
            <svg width="30" height="32" viewBox="0 0 30 32"><rect x="0" y="0" width="22" height="22" fill="#a48fe0"/><rect x="4" y="2" width="14" height="18" fill="#1c1c1c" opacity=".3"/><rect x="7" y="12" width="22" height="18" fill="#1c1c1c" stroke="#3cc79a" stroke-width="2"/><path d="M10 17l4 4-4 4zM15 17l4 4-4 4zM20 17l4 4-4 4z" fill="#3cc79a"/></svg>
            <span>garara.mp4</span></span></div>
        <div class="pj-pad"><i class="pill"></i></div>
      </div>
      <div class="pj-foot">${placed(0, 40, [
        [93 - 49, html`<span class="pf-pencil">${ic(30, 30, svg`<path d="M1 29l3-9L20 2l8 7L11 26z"/><path d="M4 21l6 5" stroke="#232323" stroke-width="1.500"/>`)}</span>`],
        [154 - 49, html`<span class="blue">${ic(34, 22, svg`<rect x="0" y="1" width="10" height="9"/><rect x="0" y="13" width="10" height="9"/><rect x="14" y="4" width="20" height="2"/><rect x="14" y="16" width="20" height="2"/>`)}</span>`],
        [214 - 49, ic(22, 22, svg`<rect x="1" y="0" width="20" height="15"/><rect x="1" y="19" width="20" height="2.500"/>`)],
        [274 - 49, ic(38, 22, svg`<path d="M1 1h18v2H3v8H1zM6 5h18v2H8v8H6z"/><rect x="16" y="9" width="22" height="13"/><rect x="11" y="7" width="18" height="2"/>`)],
      ])}
        <i class="knob pf-knob"></i>
        <i class="thumbline"></i>
        <span class="pf-sort">${ic(28, 26, svg`<rect x="0" y="0" width="28" height="4"/><rect x="0" y="11" width="24" height="4"/><rect x="0" y="22" width="20" height="4"/>`)}</span>
      </div>
    </div>`;
  }

  private toolsPanel() {
    return html`<div class="panel tools">
      ${tools.map(([t, tri], i) => html`<div class="tool ${i === 0 ? "on" : ""}">${t}${tri ? html`<i class="tri"></i>` : null}</div>`)}
    </div>`;
  }

  private timeline() {
    const v = (n: string, tgt: boolean, eye: unknown) => html`<div class="tr">
      <span></span><span class="tgt">${n}</span><span>${lockI()}</span>
      <span class="${tgt ? "tgt" : ""}">${n}</span><span>${syncI()}</span><span>${eye}</span><span></span><span></span>
    </div>`;
    const a = (n: string) => html`<div class="tr">
      <span></span><span class="tgt">${n}</span><span>${lockI()}</span>
      <span class="tgt">${n}</span><span>${syncI()}</span><span>M</span><span>S</span><span class="dim">${micI()}</span>
    </div>`;
    return html`<div class="panel timeline">
      <div class="tl-top">
        <div class="tl-left">
          <div class="tl-tab"><span class="tl-x">×</span><span>garara</span>${burger()}</div>
          <div class="tc tc-t">00;00;00;00</div>
          <div class="tl-tools">${placed(658, 40, [
            [715, html`<svg width="32" height="30" viewBox="0 0 32 30" fill="currentColor"><rect x="15" y="0" width="2.500" height="30"/><rect x="12" y="0" width="8" height="4"/><rect x="0" y="13" width="13" height="3"/><rect x="20" y="8" width="11" height="3"/><rect x="20" y="13" width="6" height="3"/><rect x="7" y="8" width="6" height="3"/><rect x="7" y="21" width="6" height="3"/><rect x="20" y="21" width="12" height="3"/></svg>`],
            [782, html`<svg width="26" height="26" viewBox="0 0 26 26"><path d="M5 24V12a8 8 0 0 1 16 0v12" fill="none" stroke="#2d8ceb" stroke-width="6"/><path d="M2 19h6v6H2zM18 19h6v6h-6z" fill="#1a5f9c"/></svg>`],
            [850, ic(30, 28, svg`<path d="M0 1h8v12H0zM0 16h7v2H2v6h6v2H0z"/><path d="M10 1h19l-7 8 5 8-8-3-3 12z"/>`)],
            [919, ic(40, 40, svg`<path d="M12 11h16v13l-8 6-8-6z"/>`)],
            [986, wrench(30)],
          ])}</div>
        </div>
        <div class="tl-right">
          <div class="labels">${rulerLabels.map((l) => html`<span>${l}</span>`)}</div>
          ${tlRuler()}
          <div class="work"></div>
          <i class="cti"></i>
        </div>
      </div>
      <div class="tl-tracks">
        <div class="thead">
          <div class="spacer"></div>
          ${v("V3", false, eyeI())}
          ${v("V2", false, eyeOff())}
          ${v("V1", true, eyeOff())}
          <div class="band"></div>
          ${a("A1")}${a("A2")}${a("A3")}
          <div class="mask"><span></span><span></span><span>${ic(20, 10, svg`<path d="M4 10V6a5 5 0 0 1 9.500-2" fill="none" stroke="currentColor" stroke-width="2"/>`)}</span><span>マスター</span><span class="bow">${ic(24, 14, svg`<path d="M0 0l10 7L0 14zM24 0L14 7l10 7z"/>`)}</span></div>
        </div>
        <div class="tbody">
          <div class="spacer"></div>
          <div class="bline"></div>
          <div class="bline"></div>
          <div class="bline"><div class="clip">garara.mp4 [V]</div></div>
          <div class="bband"></div>
          <div class="bline"><div class="aclip">
            <svg width="845" height="22">${wave(845, topWave, 22)}</svg>
            <svg width="845" height="2"><rect width="845" height="2" fill="#7099cf"/></svg>
            <svg width="845" height="24">${wave(845, botWave, 22)}<rect y="22" width="845" height="2" fill="#7099cf"/></svg>
            <span class="aclab">garara.mp4 [A]</span>
          </div></div>
          <div class="bline"></div>
          <div class="bline"></div>
        </div>
        <div><div class="vs"><i class="knob"></i><i class="knob"></i><i class="knob"></i><i class="knob"></i></div></div>
      </div>
      <div class="zoom"><i class="z1"></i><div class="z2"><i class="knob"></i><i class="knob"></i></div><i class="z3"></i></div>
    </div>`;
  }

  private meter() {
    return html`<div class="panel meter">
      <div class="mbox"><div class="mtop"><i></i><i></i></div><div class="mbody"><i><b></b></i><i><b></b></i></div></div>
      <div class="mss"><span>S</span><span>S</span></div>
    </div>`;
  }

  private fxPanel() {
    return html`<div class="panel fx">
      <div class="fx-head"><span>エフェクト</span>${burger()}</div>
      <div class="sbox fx-search">${search()}</div>
      <div class="fx-list">${fxItems.map(([t, star]) => html`<div class="fx-row">${chevron()}<span>${star ? starFolder() : folder()}</span><span class="lab ${t.startsWith("Lumetri") ? "lm" : ""}">${t}</span></div>`)}</div>
      <div class="fx-foot">${placed(0, 40, [
        [2479 - 2136, ic(28, 24, svg`<rect x="1" y="2" width="9" height="1.500"/><rect x="1" y="6" width="26" height="16"/>`)],
        [2527 - 2136, html`<span class="trash">${ic(24, 26, svg`<path d="M8 3V1h8v2M1 4h22M4 6v18h16V6M9 9v12M12 9v12M15 9v12" fill="none" stroke="currentColor" stroke-width="2"/>`)}</span>`],
      ])}</div>
      ${fxPanels.map((p) => html`<div class="fx-tab">${p}</div>`)}
    </div>`;
  }

  render() {
    return html`<div class="screen">
      ${this.menubar()}
      <div class="strip"></div>
      <div class="main">
        <div class="desktop">
          <div class="d-top"><i class="d-circle"></i></div>
          <div class="d-arrow">${ic(19, 26, svg`<path d="M18 13H3M13 1L2 13l11 12" fill="none" stroke="currentColor" stroke-width="2"/>`)}</div>
          <div class="d-fill"></div>
          <div class="d-foot"></div>
        </div>
        <div class="window">
          <div class="title">
            <div class="lights"><i class="red"></i><i class="yel"></i><i class="grn"></i></div>
            /ユーザ/mochizukiemi/iCloud Drive（アーカイブ）/デスクトップ/私用/名称未設定.prproj *
          </div>
          ${this.workspace()}
          <div class="body">
            <div class="left">
              <div class="top-row">${this.effectControls()}${this.program()}</div>
              <div class="bottom-row">${this.project()}${this.toolsPanel()}${this.timeline()}${this.meter()}</div>
            </div>
            ${this.fxPanel()}
          </div>
          <div class="statusbar">
            ${ic(34, 28, svg`<path d="M17 2a9 9 0 0 1 9 7 8.500 8.500 0 0 1-1 17H9A8.500 8.500 0 0 1 8 9a9 9 0 0 1 9-7z" fill="none" stroke="currentColor" stroke-width="1.500"/><path d="M11 12a5 5 0 0 0 0 10h2c5 0 6-10 10-10a5 5 0 0 1 0 10h-3" fill="none" stroke="currentColor" stroke-width="1.500"/>`)}
            <span>既存の選択項目に追加または削除します。</span>
          </div>
        </div>
      </div>
    </div>`;
  }
}
